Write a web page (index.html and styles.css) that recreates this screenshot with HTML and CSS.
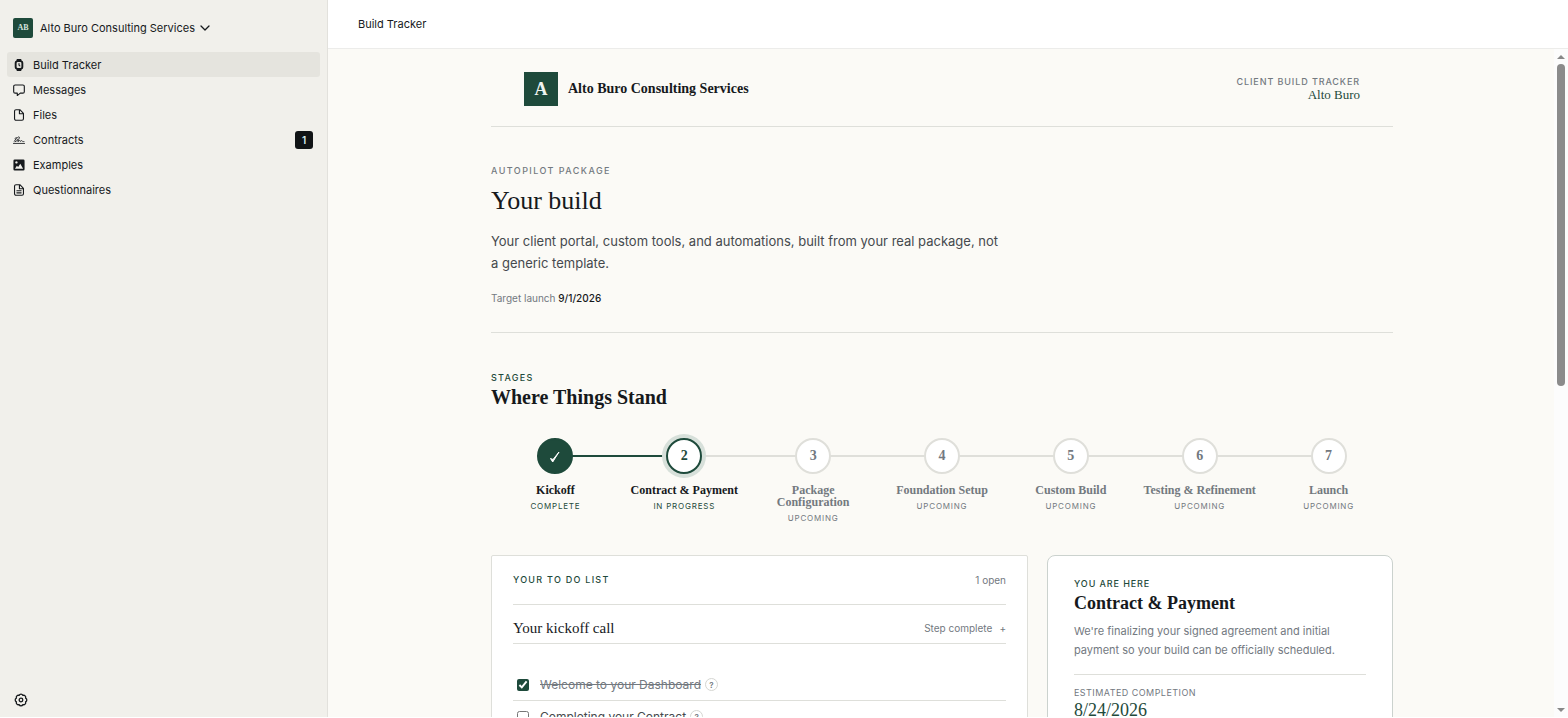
FILE: index.html
```html
<!DOCTYPE html>
<html lang="en">
<head>
    <meta charset="UTF-8">
    <title>Build Tracker | Alto Buro Consulting Services</title>
    <meta name="viewport" content="width=device-width, initial-scale=1.0">
    <link rel="stylesheet" href="styles.css">
</head>
<body>

<div class="app">
    <aside class="sidebar">
        <button class="workspace" type="button">
            <span class="workspace-logo">AB</span>
            <span>Alto Buro Consulting Services</span>
            <svg class="chevron" viewBox="0 0 10 10"><path d="M1 3l4 4 4-4"/></svg>
        </button>
        <nav>
            <a class="nav-item active" href="#">
                <svg class="icon" viewBox="0 0 14 14"><path class="fill" fill-rule="evenodd" d="M4.500 0h5l0.500 1.800a3 3 0 0 1 2 2.700v5a3 3 0 0 1-2 2.700l-0.500 1.800h-5l-0.500-1.800a3 3 0 0 1-2-2.700v-5a3 3 0 0 1 2-2.700zM5.500 3.500a1.300 1.300 0 0 0-1.300 1.300v4.400a1.300 1.300 0 0 0 1.300 1.300h3a1.300 1.300 0 0 0 1.300-1.300V4.800a1.300 1.300 0 0 0-1.300-1.300z"/><path d="M7 5.200v2l1 0.800"/></svg>
                Build Tracker
            </a>
            <a class="nav-item" href="#">
                <svg class="icon" viewBox="0 0 14 14"><path d="M2.500 1.200h9A1.700 1.700 0 0 1 13.200 3v6a1.700 1.700 0 0 1-1.700 1.700H8.500L5 13.500v-2.800H2.500A1.700 1.700 0 0 1 0.800 9V3a1.700 1.700 0 0 1 1.700-1.800z"/></svg>
                Messages
            </a>
            <a class="nav-item" href="#">
                <svg class="icon" viewBox="0 0 14 14"><path d="M3.500 0.800h4.500l4.200 4.200v6.500a1.700 1.700 0 0 1-1.700 1.700h-7A1.700 1.700 0 0 1 1.800 11.500v-9A1.700 1.700 0 0 1 3.500 0.800zM7.500 0.800v4.700h4.700"/></svg>
                Files
            </a>
            <a class="nav-item" href="#">
                <svg class="icon thin" viewBox="0 0 14 14"><path d="M0.500 11h13M1.500 8.500C3 6 5 4.500 5.800 3.800c1-1 2.400-0.300 1.400 1.400C6.500 6.600 4 8.200 2.500 9M4 4.200c-1.500 0.200-2 1-1.500 1.800M5 6.800c1.500-0.500 2 0.300 0.800 2.200 1.200-1.500 2.200-2 2.400-1.200 0 0.700 0.300 1.200 1 0.500 0.800-0.800 1.300-0.800 1.600 0 0.300 0.600 1 0.600 2 0.500"/></svg>
                Contracts
                <span class="badge">1</span>
            </a>
            <a class="nav-item" href="#">
                <svg class="icon" viewBox="0 0 14 14"><path class="fill" fill-rule="evenodd" d="M2 0.500h10A1.500 1.500 0 0 1 13.500 2v10a1.500 1.500 0 0 1-1.500 1.500H2A1.500 1.500 0 0 1 0.500 12V2A1.500 1.500 0 0 1 2 0.500zM4 2.500a1.400 1.400 0 1 0 0.010 0zM2.300 11.500h9.500L8.500 5.500 6 9.300 4.500 7.800z"/></svg>
                Examples
            </a>
            <a class="nav-item" href="#">
                <svg class="icon" viewBox="0 0 14 14"><path d="M3.500 0.800h4.500l4.200 4.200v6.500a1.700 1.700 0 0 1-1.700 1.700h-7A1.700 1.700 0 0 1 1.800 11.500v-9A1.700 1.700 0 0 1 3.500 0.800zM7.500 0.800v4.700h4.700M4.500 7.800h5M4.500 10.300h5"/></svg>
                Questionnaires
            </a>
        </nav>
        <button class="settings" type="button" aria-label="Settings">
            <svg class="icon" viewBox="0 0 14 14"><path d="M11.600 5.100A2.100 2.100 0 0 1 11.600 8.900A2.100 2.100 0 0 1 8.900 11.600A2.100 2.100 0 0 1 5.100 11.600A2.100 2.100 0 0 1 2.400 8.900A2.100 2.100 0 0 1 2.400 5.100A2.100 2.100 0 0 1 5.100 2.400A2.100 2.100 0 0 1 8.900 2.400A2.100 2.100 0 0 1 11.600 5.100z"/><circle cx="7" cy="7" r="1.800"/></svg>
        </button>
    </aside>

    <main class="main">
        <div class="topbar">Build Tracker</div>
        <div class="viewport">
            <div class="page">
                <header class="brand">
                    <span class="brand-logo">A</span>
                    <span class="brand-name">Alto Buro Consulting Services</span>
                    <div class="brand-client">
                        <div class="eyebrow tight">Client Build Tracker</div>
                        <div class="client-name">Alto Buro</div>
                    </div>
                </header>

                <section class="hero">
                    <div class="eyebrow">Autopilot Package</div>
                    <h1>Your build</h1>
                    <p class="intro">Your client portal, custom tools, and automations, built from your real package, not a generic template.</p>
                    <p class="target">Target launch <strong>9/1/2026</strong></p>
                </section>

                <section class="progress">
                    <div class="eyebrow green">Stages</div>
                    <h2>Where Things Stand</h2>
                    <ol class="stages">
                        <li class="stage complete">
                            <span class="dot"><svg viewBox="0 0 14 14"><path d="M2.500 8.500l2.200 3.500L11 2 5 9.500z"/></svg></span>
                            <b>Kickoff</b>
                            <small>Complete</small>
                        </li>
                        <li class="stage current">
                            <span class="dot">2</span>
                            <b>Contract &amp; Payment</b>
                            <small>In progress</small>
                        </li>
                        <li class="stage">
                            <span class="dot">3</span>
                            <b>Package<br>Configuration</b>
                            <small>Upcoming</small>
                        </li>
                        <li class="stage">
                            <span class="dot">4</span>
                            <b>Foundation Setup</b>
                            <small>Upcoming</small>
                        </li>
                        <li class="stage">
                            <span class="dot">5</span>
                            <b>Custom Build</b>
                            <small>Upcoming</small>
                        </li>
                        <li class="stage">
                            <span class="dot">6</span>
                            <b>Testing &amp; Refinement</b>
                            <small>Upcoming</small>
                        </li>
                        <li class="stage">
                            <span class="dot">7</span>
                            <b>Launch</b>
                            <small>Upcoming</small>
                        </li>
                    </ol>
                </section>

                <div class="cards">
                    <section class="todo">
                        <div class="todo-head">
                            <div class="eyebrow green">Your To Do List</div>
                            <span class="muted">1 open</span>
                        </div>
                        <button class="todo-step" type="button">
                            <span class="step-name">Your kickoff call</span>
                            <span class="muted">Step complete</span>
                            <span class="plus">+</span>
                        </button>
                        <ul>
                            <li class="task done">
                                <input type="checkbox" id="task-1" checked>
                                <label for="task-1">Welcome to your Dashboard</label>
                                <button class="help" type="button">?</button>
                            </li>
                            <li class="task">
                                <input type="checkbox" id="task-2">
                                <label for="task-2">Completing your Contract</label>
                                <button class="help" type="button">?</button>
                            </li>
                        </ul>
                    </section>

                    <section class="here">
                        <div class="eyebrow green tight">You are here</div>
                        <h3>Contract &amp; Payment</h3>
                        <p class="here-text">We're finalizing your signed agreement and initial payment so your build can be officially scheduled.</p>
                        <div class="estimate">
                            <div class="estimate-label">Estimated completion</div>
                            <div class="estimate-date">8/24/2026</div>
                        </div>
                    </section>
                </div>
            </div>
            <div class="scrollbar">
                <span class="arrow-up"></span>
                <span class="thumb"></span>
                <span class="arrow-down"></span>
            </div>
        </div>
    </main>
</div>

</body>
</html>
```
FILE: styles.css
```css
* { box-sizing: border-box; }
:root {
    --green: #1e4a3b;
    --ink: #16191c;
    --gray: #73797f;
    --line: #dedfda;
    --paper: #fbfaf6;
    --serif: "Liberation Serif", serif;
}
body {
    margin: 0;
    font-family: Inter, sans-serif;
    font-size: 12px;
    color: var(--ink);
}
button {
    border: none;
    padding: 0;
    background: none;
    font: inherit;
    color: inherit;
    cursor: pointer;
}
h1, h2, h3, p, ul, ol { margin: 0; }
ul, ol { padding: 0; list-style: none; }

.app {
    display: flex;
    height: 100vh;
    overflow: hidden;
    border-bottom: 1px solid #fff;
}

/* sidebar */
.sidebar {
    display: flex;
    flex-direction: column;
    flex: 0 0 328px;
    padding: 18px 7px 9px;
    background: #f1f0eb;
    border-right: 1px solid #e2e1dc;
}
.workspace {
    display: flex;
    align-items: center;
    gap: 7px;
    height: 20px;
    margin: 0 6px 14px;
    font-size: 11px;
}
.workspace-logo {
    width: 20px;
    border-radius: 2px;
    background: var(--green);
    color: #d5e2db;
    font: bold 8px/20px var(--serif);
    text-align: center;
}
.chevron { width: 10px; margin-left: -2px; }
.icon { width: 12px; height: 12px; }
.icon path, .icon circle, .chevron path {
    fill: none;
    stroke: var(--ink);
    stroke-width: 1.3;
    stroke-linecap: round;
    stroke-linejoin: round;
}
.icon.thin path { stroke-width: 1; }
.icon .fill { fill: var(--ink); stroke: none; }
nav {
    display: flex;
    flex-direction: column;
}
.nav-item {
    display: flex;
    align-items: center;
    gap: 8px;
    height: 25px;
    padding: 0 7px 0 6px;
    border-radius: 3px;
    color: var(--ink);
    font-size: 11px;
    text-decoration: none;
}
.nav-item.active { background: #e5e4de; }
.badge {
    width: 18px;
    margin-left: auto;
    border-radius: 3px;
    background: #111416;
    color: #d4ecee;
    font-size: 10px;
    font-weight: 600;
    line-height: 18px;
    text-align: center;
}
.settings {
    display: flex;
    align-items: center;
    justify-content: center;
    width: 28px;
    height: 16px;
    margin-top: auto;
}
.settings .icon { width: 14px; height: 14px; }

/* main area */
.main {
    display: flex;
    flex-direction: column;
    flex: 1;
    min-width: 0;
}
.topbar {
    flex: none;
    height: 49px;
    padding-left: 30px;
    border-bottom: 1px solid #ececea;
    font-size: 11px;
    line-height: 48px;
}
.viewport {
    display: flex;
    flex: 1;
    min-height: 0;
    padding-left: 2px;
    overflow: hidden;
    background: var(--paper);
}
.page {
    width: 100%;
    max-width: 902px;
    margin: 0 auto;
}
.scrollbar {
    display: flex;
    flex-direction: column;
    align-items: center;
    flex: 0 0 14px;
    padding: 6px 0 5px;
    background: #fcfcfc;
}
.arrow-up, .arrow-down {
    border: 4px solid transparent;
    border-top-width: 0;
    border-bottom: 4px solid #888;
}
.arrow-down {
    margin-top: auto;
    border-bottom-width: 0;
    border-top: 4px solid #888;
}
.thumb {
    width: 8px;
    height: 49%;
    margin-top: 5px;
    border-radius: 4px;
    background: #8b8b8b;
}

.eyebrow {
    color: var(--gray);
    font-size: 9px;
    font-weight: 500;
    line-height: 12px;
    letter-spacing: 0.16em;
    text-transform: uppercase;
}
.eyebrow.green { color: var(--green); letter-spacing: 0.14em; }
.eyebrow.tight { letter-spacing: 0.1em; }
.brand {
    display: flex;
    align-items: center;
    height: 78px;
    padding: 2px 33px 0;
    border-bottom: 1px solid var(--line);
}
.brand-logo {
    width: 34px;
    margin-right: 10px;
    background: var(--green);
    color: #f0f4f0;
    font: bold 18px/34px var(--serif);
    text-align: center;
}
.brand-name { font: bold 14px/20px var(--serif); }
.brand-client {
    margin-left: auto;
    text-align: right;
}
.client-name {
    color: var(--green);
    font: 13px/14px var(--serif);
}

.hero {
    padding: 38px 0 26px;
    border-bottom: 1px solid var(--line);
}
h1 {
    margin: 6px 0 11px;
    font: 26px/36px var(--serif);
}
.intro {
    max-width: 514px;
    color: #45494d;
    font-size: 13px;
    line-height: 22px;
}
.target {
    margin-top: 16px;
    color: var(--gray);
    font-size: 10px;
    line-height: 16px;
}
.target strong { color: var(--ink); font-weight: 500; }

/* stages */
.progress { padding-top: 39px; }
h2 { font: bold 20px/26px var(--serif); }
.stages {
    display: grid;
    grid-template-columns: repeat(7, 1fr);
    margin: 28px 0 32px;
}
.stage {
    position: relative;
    display: flex;
    flex-direction: column;
    align-items: center;
    text-align: center;
}
/* connector to the next stage */
.stage:not(:last-child)::after {
    content: "";
    position: absolute;
    top: 17px;
    left: 50%;
    width: 100%;
    height: 2px;
    background: #dfdfda;
}
.stage.complete::after { background: var(--green); }
.dot {
    position: relative;
    z-index: 1;
    width: 36px;
    height: 36px;
    margin-bottom: 10px;
    border: 2px solid #dfdfda;
    border-radius: 50%;
    background: #fff;
    color: var(--gray);
    font: bold 14px/32px var(--serif);
}
.dot svg {
    width: 14px;
    height: 14px;
    vertical-align: middle;
    fill: #fff;
    stroke: #fff;
    stroke-linejoin: round;
}
.complete .dot { border-color: var(--green); background: var(--green); }
.current .dot {
    border-color: var(--green);
    color: var(--green);
    box-shadow: 0 0 0 4px #d7e0da;
}
.stage b {
    color: var(--gray);
    font: bold 12px/12px var(--serif);
}
.complete b, .current b { color: var(--ink); }
.stage small {
    margin-top: 5px;
    color: var(--gray);
    font-size: 8px;
    line-height: 10px;
    letter-spacing: 0.1em;
    text-transform: uppercase;
}
.complete small, .current small { color: var(--green); }

/* cards */
.cards {
    display: grid;
    grid-template-columns: minmax(0, 1fr) 346px;
    gap: 19px;
}
.todo, .here {
    border: 1px solid var(--line);
    background: #fff;
}
.todo { padding: 0 21px; border-radius: 2px; }
.here { padding: 22px 26px; border-color: #cbd2ce; border-radius: 8px; }
.muted { color: var(--gray); font-size: 10px; }
.todo-head {
    display: flex;
    align-items: center;
    justify-content: space-between;
    height: 49px;
    border-bottom: 1px solid var(--line);
}
.todo-step {
    display: flex;
    align-items: center;
    width: 100%;
    height: 39px;
    padding-top: 8px;
    border-bottom: 1px solid var(--line);
}
.step-name { margin-right: auto; font: 15px/20px var(--serif); }
.plus { margin-left: 7px; color: var(--gray); font-size: 10px; }
.todo ul { margin-top: 25px; }
.task {
    display: flex;
    align-items: center;
    height: 32px;
    border-bottom: 1px solid var(--line);
}
.task input {
    width: 12px;
    height: 12px;
    margin: 0 11px 0 4px;
    accent-color: var(--green);
}
.task label { color: #45494d; }
.task.done label { color: var(--gray); text-decoration: line-through; }
.help {
    width: 13px;
    height: 13px;
    margin-left: 4px;
    border: 1px solid #d5d6d2;
    border-radius: 50%;
    color: var(--gray);
    font-size: 8px;
    font-weight: 600;
    line-height: 10px;
}

h3 { margin-bottom: 6px; font: bold 18px/26px var(--serif); }
.here-text {
    color: var(--gray);
    font-size: 11px;
    line-height: 19px;
}
.estimate {
    margin-top: 14px;
    padding-top: 12px;
    border-top: 1px solid var(--line);
}
.estimate-label {
    color: var(--gray);
    font-size: 9px;
    line-height: 12px;
    letter-spacing: 0.05em;
    text-transform: uppercase;
}
.estimate-date {
    color: var(--green);
    font: 18px/22px var(--serif);
}
```
